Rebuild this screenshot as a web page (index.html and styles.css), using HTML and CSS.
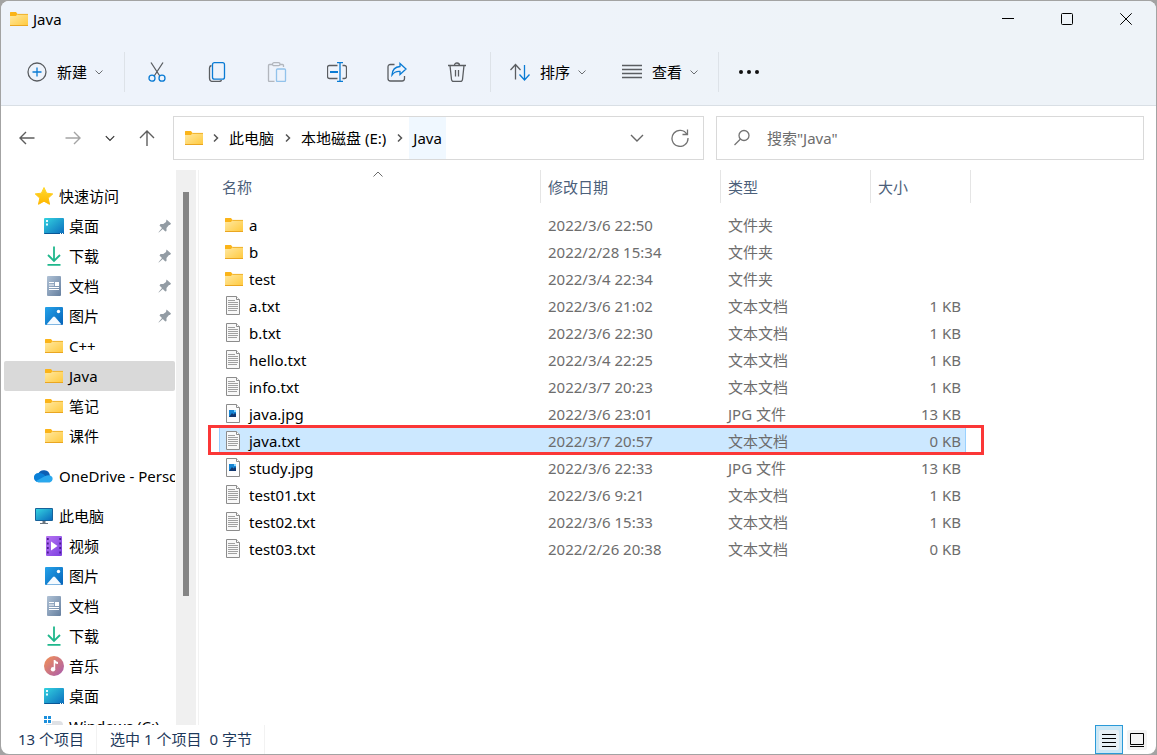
FILE: index.html
```html
<!DOCTYPE html>
<html lang="zh-CN">
<head>
<meta charset="utf-8">
<meta name="viewport" content="width=device-width, initial-scale=1">
<title>Java</title>
<link rel="stylesheet" href="styles.css">
</head>
<body>
<svg class="sprite" width="0" height="0" aria-hidden="true">
  <defs>
    <linearGradient id="g-folder" x1="0" y1="0" x2="1" y2="1"><stop offset="0" stop-color="#ffe9a4"/><stop offset="1" stop-color="#ffc93c"/></linearGradient>
    <linearGradient id="g-desk" x1="0" y1="0" x2="1" y2="1"><stop offset="0" stop-color="#34d3e0"/><stop offset="1" stop-color="#0a6cbd"/></linearGradient>
    <linearGradient id="g-doc" x1="0" y1="0" x2="1" y2="1"><stop offset="0" stop-color="#b0c2d6"/><stop offset="1" stop-color="#657f9f"/></linearGradient>
    <linearGradient id="g-pic" x1="0" y1="0" x2="1" y2="1"><stop offset="0" stop-color="#25a3ea"/><stop offset="1" stop-color="#0562b8"/></linearGradient>
    <linearGradient id="g-vid" x1="0" y1="0" x2="1" y2="1"><stop offset="0" stop-color="#b673f2"/><stop offset="1" stop-color="#7c40e0"/></linearGradient>
    <linearGradient id="g-mus" x1="0" y1="0" x2="1" y2="1"><stop offset="0" stop-color="#f59252"/><stop offset="1" stop-color="#a75bb0"/></linearGradient>
    <linearGradient id="g-star" x1="0" y1="0" x2="0" y2="1"><stop offset="0" stop-color="#ffd92e"/><stop offset="1" stop-color="#ffb700"/></linearGradient>
  </defs>
  <symbol id="folder" viewBox="0 0 20 20">
    <path d="M1 3.500q0-.5.500-.5H7l1.500 2v3H1z" fill="#fbb418"/>
    <path d="M1 7h6l1.500-2H19v12H1z" fill="url(#g-folder)"/>
    <path d="M8.300 5.400H19" stroke="#f0b22c" stroke-width="1"/>
    <path d="M1 16.500h18" stroke="#eaa621" stroke-width="1"/>
  </symbol>
  <symbol id="star" viewBox="0 0 20 20"><path d="M10 1.500l2.600 5.700 6.200.700-4.600 4.200 1.300 6.200L10 15.200l-5.500 3.100 1.300-6.200L1.200 7.900l6.200-.7z" fill="url(#g-star)" stroke="url(#g-star)" stroke-linejoin="round"/></symbol>
  <symbol id="desktop" viewBox="0 0 20 20"><rect x="0" y="2" width="20" height="16" rx="1" fill="url(#g-desk)"/><path d="M0 17h20v0q0 1-1 1H1q-1 0-1-1z" fill="#0a5796"/><path d="M2 4h2v2H2zM2 7.500h2v2H2z" fill="#e8fbff"/><path d="M16 17.500h3" stroke="#fff" stroke-dasharray="1 1"/></symbol>
  <symbol id="download" viewBox="0 0 20 20"><path d="M10 .500v14M4 9l6 6 6-6M3.500 18.800h13" fill="none" stroke="#1fb78c" stroke-width="1.800"/></symbol>
  <symbol id="document" viewBox="0 0 20 20"><rect x="3" y="0" width="14" height="20" rx="1" fill="url(#g-doc)"/><path d="M5 6.500h5M5 9h5M5 11.500h10M5 13.500h10" stroke="#fff"/><path d="M11 6h4v4h-4z" fill="#fff"/></symbol>
  <symbol id="picture" viewBox="0 0 20 20"><rect x="1" y="1" width="18" height="18" rx="1" fill="url(#g-pic)"/><path d="M2.500 18.500L9 11q1-1 2 0l6.500 7.500z" fill="#f4faff"/><circle cx="14.500" cy="5.500" r="1.700" fill="#fff"/></symbol>
  <symbol id="video" viewBox="0 0 20 20"><rect x="2" y="0" width="16" height="20" rx="1" fill="url(#g-vid)"/><path d="M3.800 2v17M16.200 2v17" stroke="#4b1c91" stroke-width="1.800" stroke-dasharray="2 2.500"/><path d="M7 5.500v9l6.500-4.500z" fill="#fff"/></symbol>
  <symbol id="music" viewBox="0 0 20 20"><circle cx="10" cy="10" r="10" fill="url(#g-mus)"/><circle cx="9" cy="13.200" r="2.200" fill="#fff"/><path d="M9.700 4h1.500q.300 1.600 2.800 2v2q-1.800 0-2.800-.8v6H9.700z" fill="#fff"/></symbol>
  <symbol id="cloud" viewBox="0 0 20 20"><path d="M4 8a6.300 6.300 0 0 1 12 1.500L9 14z" fill="#0c5fb4"/><path d="M4.500 16.200A4.600 4.600 0 0 1 4.500 7q3-.5 5.500 1.500l6 7.700z" fill="#0a80d8"/><path d="M4.500 16.200q-1.500 0-2.800-1l9-5q3.500-1.700 6-.500a3.500 3.500 0 0 1-.500 6.500z" fill="#2aa8ed"/></symbol>
  <symbol id="pc" viewBox="0 0 20 20"><rect x="1" y="2" width="18" height="13" rx="1" fill="#17629a"/><rect x="2" y="3" width="16" height="11" fill="url(#g-desk)"/><path d="M8.500 15h3v2h2.500v1H6v-1h2.500z" fill="#6b7680"/></symbol>
  <symbol id="drive" viewBox="0 0 20 20"><path d="M0 0h3v3H0zM4 0h3v3H4zM0 4h3v3H0zM4 4h3v3H4z" fill="#1c8fdc"/><path d="M2 9V8h6V5h7q4 0 4 4v4H2z" fill="#dfe1e5"/></symbol>
  <symbol id="pin" viewBox="0 0 14 14"><path d="M8.500.500L13 4.500 12 6l-1 .100L8.500 9v3L7.300 12.500 4.800 10 .800 13.500.500 13.200 4 9 1.500 6.500 2.500 5H5.300L8 3z" fill="#939ca4"/></symbol>
  <symbol id="text" viewBox="0 0 20 20"><path d="M2.500.500h10l3 3v15h-13z" fill="#f8f8f8" stroke="#8c8c8c"/><path d="M12.500.500v3h3" fill="#fff" stroke="#8c8c8c"/><path d="M4 4.500h7M4 6.500h10M4 8.500h10M4 10.500h10M4 12.500h10M4 14.500h9" stroke="#a0a0a0"/></symbol>
  <symbol id="image" viewBox="0 0 20 20"><path d="M2.500.500h10l3 3v15h-13z" fill="#fcfcfc" stroke="#8c8c8c"/><path d="M12.500.500v3h3" fill="#fff" stroke="#8c8c8c"/><path d="M5 6h7v7H5z" fill="#1685d4"/><path d="M5 13l3-4 1.500 1.500L11 9l1 1v3z" fill="#10366f"/><path d="M10 6h2v2h-2z" fill="#7fd3ff"/></symbol>
  <symbol id="chev-down" viewBox="0 0 10 10"><path d="M1.500 3.500L5 7l3.500-3.500" fill="none" stroke="currentColor"/></symbol>
  <symbol id="chev-right" viewBox="0 0 10 10"><path d="M3.500 1.500L7 5 3.500 8.500" fill="none" stroke="currentColor" stroke-width="1.500"/></symbol>
</svg>

<div class="window">
  <header class="chrome">
    <div class="titlebar">
      <h1 class="title"><svg class="icon"><use href="#folder"/></svg>Java</h1>
      <div class="controls">
        <button class="control" aria-label="最小化"><svg viewBox="0 0 12 12"><path d="M0 5.500h12"/></svg></button>
        <button class="control" aria-label="最大化"><svg viewBox="0 0 12 12"><rect x=".5" y=".5" width="11" height="11" rx="1"/></svg></button>
        <button class="control" aria-label="关闭"><svg viewBox="0 0 12 12"><path d="M.300.300l11.400 11.400M11.700.300L.300 11.700"/></svg></button>
      </div>
    </div>
    <div class="toolbar" role="toolbar">
      <button class="menu"><svg class="tool" viewBox="0 0 20 20"><circle cx="10" cy="10" r="9"/><path class="blue" d="M10 5.500v9M5.500 10h9"/></svg><span class="menu-label">新建</span><svg class="chev"><use href="#chev-down"/></svg></button>
      <span class="divider divider-first"></span>
      <button class="action" aria-label="剪切"><svg class="tool" viewBox="0 0 20 20"><path d="M4 .500L12.800 14M16 .500L7.200 14"/><circle class="blue" cx="5" cy="16.200" r="3"/><circle class="blue" cx="15" cy="16.200" r="3"/></svg></button>
      <button class="action" aria-label="复制"><svg class="tool" viewBox="0 0 20 20"><path d="M4.500 3.500Q2.500 4 2.500 6v10q0 3.500 3.500 3.500h6q2 0 2.500-1.500"/><rect class="blue" x="5.500" y=".7" width="12" height="16.500" rx="2"/></svg></button>
      <button class="action" aria-label="粘贴" disabled><svg class="tool" viewBox="0 0 20 20"><path d="M5.500 2.500h-3q-1 0-1 1v15q0 1 1 1h5M13 2.500h2.500q1 0 1 1V5"/><rect x="5.500" y=".7" width="7.500" height="3" rx="1.500"/><rect class="blue" x="9.500" y="7" width="9" height="12.500" rx="1"/></svg></button>
      <button class="action" aria-label="重命名"><svg class="tool" viewBox="0 0 20 20"><path d="M10.500 3.500H2.500q-2 0-2 2v9q0 2 2 2h8M15.500 3.500h2q2 0 2 2v9q0 2-2 2h-2"/><path class="blue" d="M10 .700h6M10 19.300h6M13 .700v18.600"/><path class="blue thick" d="M3 10h8"/></svg></button>
      <button class="action" aria-label="共享"><svg class="tool" viewBox="0 0 20 20"><path d="M7.500 2.500h-4Q1 2.500 1 5v11.500q0 2.500 2.500 2.500H15q2.500 0 2.500-2.500V14"/><path class="blue" d="M13 1.500l6 5.500-6 5.500V9.500q-5-.5-8 3.500 .500-8 8-8.500z"/></svg></button>
      <button class="action" aria-label="删除"><svg class="tool" viewBox="0 0 20 20"><path d="M1 3.500h18M7.500 3.500q0-2.500 2.500-2.500t2.500 2.500M3 3.500l1.500 14q.200 2 2 2h7q1.800 0 2-2l1.500-14M8.500 8v6.500M11.500 8v6.500"/></svg></button>
      <span class="divider divider-second"></span>
      <button class="menu"><svg class="tool" viewBox="0 0 20 20"><path d="M5.500 17.500V2.500M.500 8l5-5.500 5 5.500"/><path class="blue" d="M14.500 3v15M9.500 12.500l5 5.500 5-5.500"/></svg><span class="menu-label">排序</span><svg class="chev"><use href="#chev-down"/></svg></button>
      <button class="menu menu-view"><svg class="tool" viewBox="0 0 20 20"><path d="M0 3.500h20M0 7.500h20M0 11.500h20M0 15.500h20"/></svg><span class="menu-label">查看</span><svg class="chev"><use href="#chev-down"/></svg></button>
      <span class="divider divider-third"></span>
      <button class="action" aria-label="查看更多"><svg class="dots" viewBox="0 0 22 6"><circle cx="3" cy="3" r="2"/><circle cx="11" cy="3" r="2"/><circle cx="19" cy="3" r="2"/></svg></button>
    </div>
  </header>

  <div class="navbar">
    <div class="history">
      <button class="nav-btn" aria-label="后退"><svg class="arrow" viewBox="0 0 16 16"><path d="M15.500 8H1.500M7 2L1 8l6 6"/></svg></button>
      <button class="nav-btn nav-dim" aria-label="前进"><svg class="arrow" viewBox="0 0 16 16"><path d="M.500 8h14M9 2l6 6-6 6"/></svg></button>
      <button class="nav-btn nav-small" aria-label="最近浏览的位置"><svg class="chev chev-bold"><use href="#chev-down"/></svg></button>
      <button class="nav-btn" aria-label="上移"><svg class="arrow" viewBox="0 0 16 16"><path d="M8 16V1M1 8l7-7 7 7"/></svg></button>
    </div>
    <div class="address">
      <svg class="icon"><use href="#folder"/></svg>
      <svg class="crumb-sep crumb-sep-first"><use href="#chev-right"/></svg>
      <button class="crumb">此电脑</button>
      <svg class="crumb-sep"><use href="#chev-right"/></svg>
      <button class="crumb">本地磁盘 (E:)</button>
      <svg class="crumb-sep"><use href="#chev-right"/></svg>
      <button class="crumb crumb-current">Java</button>
      <span class="grow"></span>
      <button class="addr-btn" aria-label="以前的位置"><svg class="arrow" viewBox="0 0 16 16"><path d="M2 5l6 6 6-6"/></svg></button>
      <button class="addr-btn" aria-label="刷新"><svg class="refresh" viewBox="0 0 18 18"><path d="M16 5.500A8 8 0 1 0 17 9M16.500.500v5h-5"/></svg></button>
    </div>
    <label class="search"><svg class="refresh" viewBox="0 0 18 18"><circle cx="11" cy="6.500" r="5"/><path d="M7.500 10L1.500 16"/></svg><input class="search-input" type="text" aria-label="搜索" placeholder='搜索"Java"'></label>
  </div>

  <main class="body">
    <nav class="sidebar" aria-label="导航窗格">
      <ul class="tree">
        <li><a class="node root" href="#"><svg class="icon"><use href="#star"/></svg>快速访问</a></li>
        <li><a class="node" href="#"><svg class="icon"><use href="#desktop"/></svg>桌面<svg class="pin"><use href="#pin"/></svg></a></li>
        <li><a class="node" href="#"><svg class="icon"><use href="#download"/></svg>下载<svg class="pin"><use href="#pin"/></svg></a></li>
        <li><a class="node" href="#"><svg class="icon"><use href="#document"/></svg>文档<svg class="pin"><use href="#pin"/></svg></a></li>
        <li><a class="node" href="#"><svg class="icon"><use href="#picture"/></svg>图片<svg class="pin"><use href="#pin"/></svg></a></li>
        <li><a class="node" href="#"><svg class="icon"><use href="#folder"/></svg>C++</a></li>
        <li><a class="node current" href="#"><svg class="icon"><use href="#folder"/></svg>Java</a></li>
        <li><a class="node" href="#"><svg class="icon"><use href="#folder"/></svg>笔记</a></li>
        <li><a class="node" href="#"><svg class="icon"><use href="#folder"/></svg>课件</a></li>
      </ul>
      <ul class="tree">
        <li><a class="node root" href="#"><svg class="icon"><use href="#cloud"/></svg>OneDrive - Personal</a></li>
      </ul>
      <ul class="tree">
        <li><a class="node root" href="#"><svg class="icon"><use href="#pc"/></svg>此电脑</a></li>
        <li><a class="node" href="#"><svg class="icon"><use href="#video"/></svg>视频</a></li>
        <li><a class="node" href="#"><svg class="icon"><use href="#picture"/></svg>图片</a></li>
        <li><a class="node" href="#"><svg class="icon"><use href="#document"/></svg>文档</a></li>
        <li><a class="node" href="#"><svg class="icon"><use href="#download"/></svg>下载</a></li>
        <li><a class="node" href="#"><svg class="icon"><use href="#music"/></svg>音乐</a></li>
        <li><a class="node" href="#"><svg class="icon"><use href="#desktop"/></svg>桌面</a></li>
        <li><a class="node" href="#"><svg class="icon"><use href="#drive"/></svg>Windows (C:)</a></li>
      </ul>
    </nav>
    <div class="scrollbar"><div class="thumb"></div></div>
    <section class="files">
      <table class="list">
        <colgroup><col class="c-name"><col class="c-date"><col class="c-type"><col class="c-size"><col class="c-end"></colgroup>
        <thead>
          <tr><th class="sorted">名称<svg class="sort" viewBox="0 0 10 6"><path d="M.500 5.500L5 1l4.500 4.500"/></svg></th><th>修改日期</th><th>类型</th><th colspan="2">大小</th></tr>
        </thead>
        <tbody>
          <tr><td><span class="file"><svg class="icon"><use href="#folder"/></svg>a</span></td><td>2022/3/6 22:50</td><td>文件夹</td><td></td></tr>
          <tr><td><span class="file"><svg class="icon"><use href="#folder"/></svg>b</span></td><td>2022/2/28 15:34</td><td>文件夹</td><td></td></tr>
          <tr><td><span class="file"><svg class="icon"><use href="#folder"/></svg>test</span></td><td>2022/3/4 22:34</td><td>文件夹</td><td></td></tr>
          <tr><td><span class="file"><svg class="icon"><use href="#text"/></svg>a.txt</span></td><td>2022/3/6 21:02</td><td>文本文档</td><td>1 KB</td></tr>
          <tr><td><span class="file"><svg class="icon"><use href="#text"/></svg>b.txt</span></td><td>2022/3/6 22:30</td><td>文本文档</td><td>1 KB</td></tr>
          <tr><td><span class="file"><svg class="icon"><use href="#text"/></svg>hello.txt</span></td><td>2022/3/4 22:25</td><td>文本文档</td><td>1 KB</td></tr>
          <tr><td><span class="file"><svg class="icon"><use href="#text"/></svg>info.txt</span></td><td>2022/3/7 20:23</td><td>文本文档</td><td>1 KB</td></tr>
          <tr><td><span class="file"><svg class="icon"><use href="#image"/></svg>java.jpg</span></td><td>2022/3/6 23:01</td><td>JPG 文件</td><td>13 KB</td></tr>
          <tr class="selected"><td><span class="file"><svg class="icon"><use href="#text"/></svg>java.txt</span><span class="marker"></span></td><td>2022/3/7 20:57</td><td>文本文档</td><td>0 KB</td></tr>
          <tr><td><span class="file"><svg class="icon"><use href="#image"/></svg>study.jpg</span></td><td>2022/3/6 22:33</td><td>JPG 文件</td><td>13 KB</td></tr>
          <tr><td><span class="file"><svg class="icon"><use href="#text"/></svg>test01.txt</span></td><td>2022/3/6 9:21</td><td>文本文档</td><td>1 KB</td></tr>
          <tr><td><span class="file"><svg class="icon"><use href="#text"/></svg>test02.txt</span></td><td>2022/3/6 15:33</td><td>文本文档</td><td>1 KB</td></tr>
          <tr><td><span class="file"><svg class="icon"><use href="#text"/></svg>test03.txt</span></td><td>2022/2/26 20:38</td><td>文本文档</td><td>0 KB</td></tr>
        </tbody>
      </table>
    </section>
  </main>

  <footer class="status">
    <span class="status-count">13 个项目</span>
    <span class="status-sel"><span>选中 1 个项目</span><span>0 字节</span></span>
    <span class="grow"></span>
    <button class="view view-on" aria-label="详细信息"><svg class="view-icon" viewBox="0 0 20 20"><rect width="20" height="20" rx="2" fill="#e9f1f6"/><path d="M3 4.500h14M3 8.500h14M3 12.500h14M3 16.500h14"/></svg></button>
    <button class="view" aria-label="大缩略图"><svg class="view-icon" viewBox="0 0 20 20"><rect width="20" height="20" rx="2" fill="#f3f3f3"/><path d="M3.500 3.500h13v11h-13zM3 16.500h14"/></svg></button>
  </footer>
</div>
</body>
</html>
```
FILE: styles.css
```css
* { box-sizing: border-box; }

body {
  margin: 0;
  padding: 1px;
  background: #a3a3a3;
  color: #000;
  font-family: "Noto Sans", "Noto Sans CJK SC", sans-serif;
  font-size: 15px;
  line-height: 20px;
}

button, input {
  margin: 0;
  padding: 0;
  border: 0;
  background: none;
  color: inherit;
  font: inherit;
}

svg { display: block; flex: none; }
.sprite { position: absolute; }
.icon { width: 20px; height: 20px; }
.grow { flex: 1; }

.window {
  display: flex;
  flex-direction: column;
  height: calc(100vh - 2px);
  border-radius: 8px;
  background: #fff;
  overflow: hidden;
}

/* Title bar and command bar */
.chrome {
  flex: none;
  border-bottom: 1px solid #d9dfe5;
  background: linear-gradient(100deg, #eef3fb 40%, #eef3f8 70%);
}
.titlebar { display: flex; justify-content: space-between; height: 36px; }
.title {
  display: flex;
  align-items: center;
  gap: 4px;
  margin: 0;
  padding-left: 8px;
  font-size: 15px;
  font-weight: 400;
}
.controls { display: flex; margin-right: 1px; }
.control { display: flex; align-items: center; justify-content: center; width: 59px; }
.control svg { width: 12px; height: 12px; fill: none; stroke: #000; stroke-width: 1; }

.toolbar { display: flex; align-items: center; height: 68px; padding: 2px 0 0 16px; }
.menu { display: flex; align-items: center; height: 40px; padding: 0 10px; }
.menu-label { margin: 0 7px 0 10px; }
.menu + .menu-view { margin-left: 15px; }
.action { display: flex; align-items: center; justify-content: center; width: 60px; height: 40px; }
.action:disabled { opacity: 0.4; }
.tool { width: 20px; height: 20px; fill: none; stroke: #5a5d61; stroke-width: 1.3; }
.tool .blue { stroke: #0a7bd4; }
.tool .thick { stroke-width: 2; }
.dots { width: 22px; height: 6px; fill: #111; }
.chev { width: 10px; height: 10px; color: #6b6e72; }
.divider { width: 1px; height: 40px; background: #dde2e8; }
.divider-first { margin: 0 2px 0 10px; }
.divider-second { margin: 0 9px 0 3px; }
.divider-third { margin: 0 0 0 9px; }

/* Navigation row */
.navbar {
  display: flex;
  flex: none;
  padding: 10px 12px 10px 3px;
}
.history { display: flex; margin-right: 3px; }
.nav-btn { display: flex; align-items: center; justify-content: center; width: 46px; height: 44px; color: #5d5d5d; }
.nav-dim { color: #a4a4a4; }
.nav-small { width: 28px; }
.arrow { width: 16px; height: 16px; fill: none; stroke: currentColor; stroke-width: 1.4; }
.chev-bold { width: 12px; height: 12px; color: #333; }
.address, .search { display: flex; align-items: center; height: 44px; border: 1px solid #d9d9d9; }
.address { flex: 1; margin-right: 12px; padding: 0 1px 0 10px; }
.crumb { height: 42px; padding: 0 4px; white-space: nowrap; }
.crumb-current { background: #f0f8ff; }
.crumb-sep { width: 19px; height: 10px; color: #555; }
.crumb-sep-first { margin-left: 2px; }
.addr-btn { display: flex; align-items: center; justify-content: center; width: 43px; height: 42px; color: #666; }
.refresh { width: 18px; height: 18px; fill: none; stroke: #737373; stroke-width: 1.3; }
.search { gap: 16px; width: 37vw; padding: 0 16px; }
.search-input { flex: 1; min-width: 0; outline: 0; }
.search-input::placeholder { color: #6d6d6d; opacity: 1; }

/* Navigation pane */
.body { display: flex; flex: 1; min-height: 0; }
.sidebar { flex: none; width: 174px; padding: 11px 0 0 3px; overflow: hidden; }
.tree { margin: 0 0 10px; padding: 0; list-style: none; }
.node {
  display: flex;
  align-items: center;
  gap: 5px;
  height: 30px;
  padding: 0 3px 0 40px;
  border-radius: 2px;
  color: inherit;
  text-decoration: none;
  white-space: nowrap;
}
.root { padding-left: 30px; }
.current { background: #d9d9d9; }
.pin { width: 14px; height: 14px; margin-left: auto; }
.scrollbar { flex: none; width: 20px; margin-left: 1px; padding: 22px 7px; background: #f0f0f0; }
.thumb { width: 6px; height: 79%; background: #858585; }

/* File list */
.files { flex: 1; margin-left: 2px; padding-left: 20px; border-left: 1px solid #f2f2f2; }
.list { width: 752px; border-spacing: 0; table-layout: fixed; color: #6d6d6d; }
.c-name { width: 322px; }
.c-date { width: 180px; }
.c-type { width: 150px; }
.c-size { width: 95px; }
.c-end { width: 5px; }
.list th {
  height: 33px;
  padding: 0 7px;
  border-right: 1px solid #e5e5e5;
  color: #4c607a;
  font-weight: 400;
  text-align: left;
}
.list .sorted { position: relative; padding-left: 3px; }
.sort { position: absolute; top: 1px; left: 50%; width: 10px; height: 6px; margin-left: -7px; fill: none; stroke: #6b6b6b; }
.list tbody::before { content: ""; display: block; height: 8px; }
.list td { height: 27px; padding: 0 7px; white-space: nowrap; }
.list td:first-child { padding: 0 5px; color: #000; }
.list td:nth-child(4) { padding: 0 5px; text-align: right; }
.file { display: flex; align-items: center; gap: 5px; }
.selected { position: relative; }
.selected td { background: #cce8ff; }
.selected td:first-child { box-shadow: inset 1px 0 #99d1ff; }
.selected td:last-child { box-shadow: inset -1px 0 #99d1ff; }
.marker { position: absolute; top: -2px; right: -13px; bottom: -1px; left: -11px; border: 3px solid #fb3737; }

/* Status bar */
.status {
  display: flex;
  flex: none;
  height: 29px;
  padding: 0 5px 0 17px;
  color: #1e395b;
  line-height: 28px;
}
.status-count, .status-sel { padding-right: 12px; border-right: 1px solid #f2f2f2; }
.status-sel { display: flex; gap: 8px; padding-left: 13px; }
.view { display: flex; align-items: center; justify-content: center; width: 28px; height: 29px; }
.view-on { border: 1px solid #2a9ad8; background: #cce8f6; }
.view-icon { width: 20px; height: 20px; fill: none; stroke: #000; }
.view-icon rect { stroke: none; }
```
